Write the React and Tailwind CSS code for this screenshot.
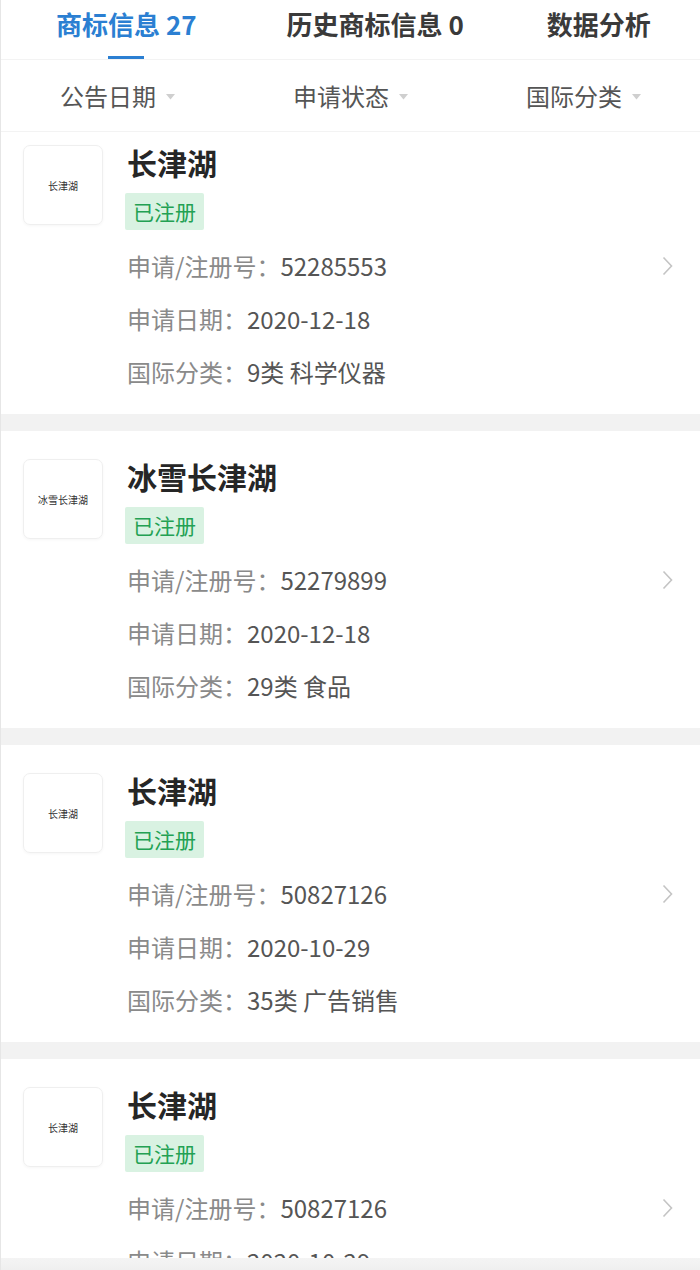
import React from "react";

const F = { fontFamily: '"Noto Sans CJK SC", "Noto Sans", sans-serif' };

const items = [
  { name: "长津湖", no: "52285553", date: "2020-12-18", cls: "9类 科学仪器" },
  { name: "冰雪长津湖", no: "52279899", date: "2020-12-18", cls: "29类 食品" },
  { name: "长津湖", no: "50827126", date: "2020-10-29", cls: "35类 广告销售" },
  { name: "长津湖", no: "50827126", date: "2020-10-29", cls: "35类 广告销售" },
];

function Tri() {
  return (
    <svg width="9" height="6" viewBox="0 0 9 6" className="ml-[10px] mt-[2px]">
      <path d="M0 0h9L4.5 5.5z" fill="#cfcfcf" />
    </svg>
  );
}

function Chevron() {
  return (
    <svg width="11" height="20" viewBox="0 0 11 20">
      <path d="M1.5 1.5L9.5 10L1.5 18.5" fill="none" stroke="#c4c4c4" strokeWidth="1.6" />
    </svg>
  );
}

function Card({ it }) {
  return (
    <div className="flex bg-white pt-[27px] pb-[16px]">
      <div className="ml-[22px] mt-[1px] w-[80px] h-[80px] rounded-[7px] border border-[#efefef] shadow-[0_1px_3px_rgba(0,0,0,0.04)] flex items-center justify-center text-[10px] text-[#333] shrink-0">
        {it.name}
      </div>
      <div className="flex-1 ml-[24px] flex flex-col items-start">
        <div className="h-[36px] leading-[36px] text-[30px] font-bold text-[#262626]">{it.name}</div>
        <div className="mt-[13px] -ml-[2px] h-[37px] px-[8px] bg-[#d9f2e2] text-[#23a153] text-[21px] leading-[37px] rounded-[2px]">
          已注册
        </div>
        <div className="mt-[9px] w-full">
          <div className="h-[53px] flex items-center justify-between pr-[27px] text-[24px]">
            <div>
              <span className="text-[#8a8a8a]">申请/注册号：</span>
              <span className="text-[#555]">{it.no}</span>
            </div>
            <Chevron />
          </div>
          <div className="h-[53px] flex items-center text-[24px]">
            <span className="text-[#8a8a8a]">申请日期：</span>
            <span className="text-[#555]">{it.date}</span>
          </div>
          <div className="h-[53px] flex items-center text-[24px]">
            <span className="text-[#8a8a8a]">国际分类：</span>
            <span className="text-[#555]">{it.cls}</span>
          </div>
        </div>
      </div>
    </div>
  );
}

export default function App() {
  return (
    <div style={F} className="w-[700px] h-[1270px] overflow-hidden bg-white border-l border-[#e6e6e6] flex flex-col">
      <div className="h-[60px] shrink-0 flex border-b border-[#f3f3f3] text-[26px] font-bold">
        <div className="ml-[55px] flex flex-col items-center">
          <div className="pt-[7px] leading-[34px] text-[#2b7fd2]">商标信息 27</div>
          <div className="mt-[15px] h-[3px] w-[36px] bg-[#2b7fd2]" />
        </div>
        <div className="ml-[90px] pt-[7px] leading-[34px] text-[#3a3a3a]">历史商标信息 0</div>
        <div className="ml-[83px] pt-[7px] leading-[34px] text-[#3a3a3a]">数据分析</div>
      </div>
      <div className="h-[72px] shrink-0 grid grid-cols-3 border-b border-[#f3f3f3] text-[24px] text-[#555]">
        {["公告日期", "申请状态", "国际分类"].map((t) => (
          <div key={t} className="pl-[59px] flex items-center">
            <span>{t}</span>
            <Tri />
          </div>
        ))}
      </div>
      <div className="flex-1 overflow-hidden bg-white">
        <div className="-mt-[15px] flex flex-col">
          {items.map((it, i) => (
            <React.Fragment key={i}>
              <Card it={it} />
              {i < items.length - 1 && <div className="h-[17px] bg-[#f2f2f2]" />}
            </React.Fragment>
          ))}
        </div>
      </div>
      <div className="h-[12px] shrink-0 bg-gradient-to-b from-[#f4f4f4] to-[#efefef]" />
    </div>
  );
}
